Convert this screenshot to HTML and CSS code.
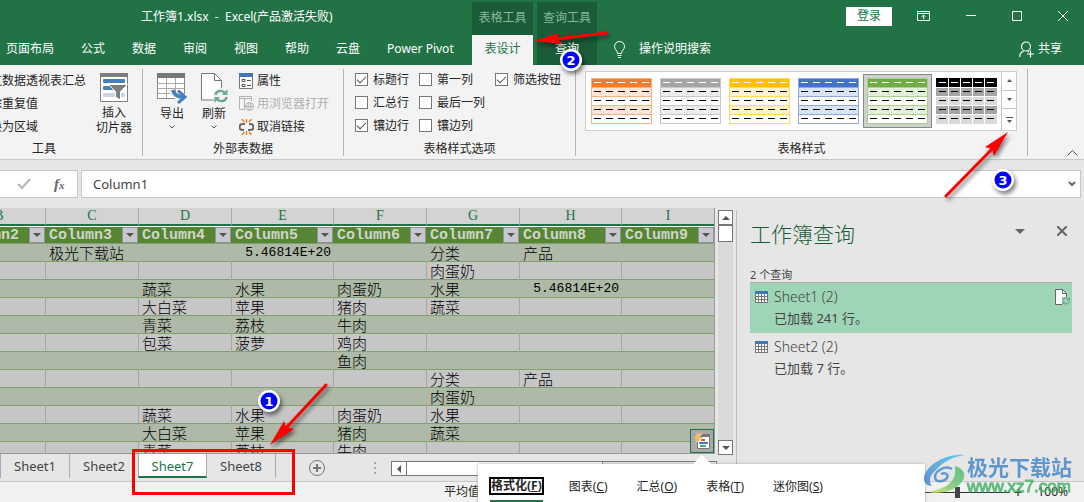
FILE: index.html
```html
<!DOCTYPE html>
<html lang="zh-CN">
<head>
<meta charset="utf-8">
<title>工作簿1.xlsx - Excel</title>
<link rel="stylesheet" href="styles.css">
</head>
<body>
<svg class="defs" width="0" height="0" aria-hidden="true">
  <symbol id="style-thumb" viewBox="0 0 61 46">
    <path fill="var(--line)" d="M0 0h61v46H0z"/>
    <path fill="var(--head)" d="M1 1h59v8H1z"/>
    <path fill="var(--band)" d="M1 10h59v8H1zM1 28h59v8H1z"/>
    <path fill="#fff" d="M1 19h59v8H1zM1 37h59v8H1z"/>
    <path stroke="#fff" stroke-dasharray="7 5" d="M3 4.500h56"/>
    <path stroke="#000" stroke-dasharray="7 5" d="M3 13.500h56M3 22.500h56M3 31.500h56M3 40.500h56"/>
  </symbol>
  <symbol id="sheet-icon" viewBox="0 0 13 12">
    <path fill="#777" d="M0 0h13v12H0z"/><path fill="#3f78b5" d="M0 0h13v3H0z"/>
    <path fill="#fff" d="M1 3h2v2H1zM4 3h2v2H4zM7 3h2v2H7zM10 3h2v2h-2zM1 6h2v2H1zM4 6h2v2H4zM7 6h2v2H7zM10 6h2v2h-2zM1 9h2v2H1zM4 9h2v2H4zM7 9h2v2H7zM10 9h2v2h-2z"/>
  </symbol>
  <symbol id="cycle" viewBox="0 0 14 14">
    <path fill="none" stroke="#6fa893" stroke-width="2.400" d="M1.500 6C2 1.500 8 .5 11 4M12.500 8C12 12.500 6 13.500 3 10"/>
    <path fill="#6fa893" d="M13.500 0v6H8zM.5 14V8H6z"/>
  </symbol>
</svg>

<header class="top">
  <div class="title">工作簿1.xlsx&nbsp; -&nbsp; Excel(产品激活失败)</div>
  <div class="context">表格工具</div>
  <div class="context">查询工具</div>
  <div class="window">
    <button class="login">登录</button>
    <button aria-label="功能区显示选项"><svg width="13" height="10" viewBox="0 0 13 10" fill="none" stroke="#fff"><path d="M.5.5h12v9H.5zM.5 2.500h12M6.500 8V4M4.500 6l2-2 2 2"/></svg></button>
    <button aria-label="最小化"><svg width="10" height="10" viewBox="0 0 10 10" stroke="#fff"><path d="M0 4.500h10"/></svg></button>
    <button aria-label="最大化"><svg width="10" height="10" viewBox="0 0 10 10" fill="none" stroke="#fff"><path d="M.5.5h9v9h-9z"/></svg></button>
    <button aria-label="关闭"><svg width="10" height="10" viewBox="0 0 10 10" stroke="#fff"><path d="M0 0l10 10M10 0L0 10"/></svg></button>
  </div>
  <nav class="tabs">
    <button>页面布局</button><button>公式</button><button>数据</button><button>审阅</button><button>视图</button><button>帮助</button><button>云盘</button><button>Power Pivot</button>
  </nav>
  <button class="tab-active">表设计</button>
  <button class="tab-query">查询</button>
  <div class="help">
    <button class="tell"><svg width="13" height="17" viewBox="0 0 13 17" fill="none" stroke="#fff"><path d="M4.500 12.500C4.500 9.500 1.500 8.500 1.500 5.500a5 5 0 0 1 10 0c0 3-3 4-3 7zM4.500 14.500h4M5 16.500h3"/></svg>操作说明搜索</button>
    <button class="share"><svg width="15" height="17" viewBox="0 0 15 17" fill="none" stroke="#fff" stroke-width="1.200"><circle cx="7" cy="5.500" r="4.500"/><path d="M.7 16c0-3 1.500-5 4-6M8.500 10l1.500 1M11.500 9.500v7M8 13h7"/></svg>共享</button>
  </div>
</header>

<section class="ribbon">
  <div class="group group-tools">
    <div class="body">
      <div class="stack words"><button>通过数据透视表汇总</button><button>删除重复值</button><button>转换为区域</button></div>
      <button class="big slicer"><svg width="28" height="29" viewBox="0 0 28 29"><path fill="#fff" stroke="#7d7d7d" d="M.5.5h27v28H.5z"/><path fill="#7d7d7d" d="M0 0h28v4H0z"/><rect x="3" y="6" width="22" height="4" rx="1" fill="#4680bd"/><rect x="3" y="13" width="15" height="4" rx="1" fill="#4680bd"/><rect x="3" y="20" width="22" height="4" rx="1" fill="#c2d5ea"/><path fill="#7d7d7d" stroke="#fff" d="M8.500 11.500h19l-7 7v8.500l-5-3v-5.500z"/></svg><span>插入<br>切片器</span></button>
    </div>
    <div class="caption">工具</div>
  </div>
  <div class="group group-data">
    <div class="body">
      <button class="big"><svg width="30" height="31" viewBox="0 0 30 31"><path fill="#fff" stroke="#8b8b8b" d="M.5.5h27v25H.5z"/><path fill="#777" d="M0 0h28v5H0z"/><path fill="none" stroke="#aaa" d="M9.500 5v20M18.500 5v20M1 10.500h26M1 15.500h26M1 20.500h26"/><path fill="none" stroke="#f3f3f3" stroke-width="6" d="M15 17c1 6 5 7 13 7"/><path fill="none" stroke="#4680bd" stroke-width="4" d="M16 17c1 5 4 7 12 7"/><path fill="none" stroke="#4680bd" stroke-width="3" d="M21 17.500l7 6.500-7 6"/></svg><span>导出</span><svg class="more" width="6" height="4" viewBox="0 0 6 4" fill="none" stroke="#555"><path d="M.5.5L3 3 5.500.5"/></svg></button>
      <button class="big"><svg width="28" height="31" viewBox="0 0 28 31"><path fill="#fff" stroke="#777" d="M1.500.5h13l7 7V27h-20z"/><path fill="none" stroke="#777" d="M14.500.5v7h7"/><circle cx="21" cy="23" r="8" fill="#f3f3f3"/><use href="#cycle" x="14" y="16" width="14" height="14"/></svg><span>刷新</span><svg class="more" width="6" height="4" viewBox="0 0 6 4" fill="none" stroke="#555"><path d="M.5.5L3 3 5.500.5"/></svg></button>
      <div class="stack">
        <button><svg width="15" height="16" viewBox="0 0 15 16"><path fill="#fff" stroke="#777" d="M.5.5h13v15H.5z"/><path fill="#3f78b5" d="M0 0h14v4H0z"/><path fill="none" stroke="#555" d="M3 6.500h3v2H3zM3 11.500h3v2H3zM8 7.500h4M8 12.500h4"/></svg>属性</button>
        <button disabled><svg width="15" height="16" viewBox="0 0 15 16" fill="none" stroke="#b3b3b3"><path d="M6 13.500H.5V.5h12V5M.5 2.500h12M5.500 3v10"/><circle cx="10.500" cy="10.500" r="4"/><path d="M6.500 10.500h8M10.500 6.500c-2 2-2 6 0 8M10.500 6.500c2 2 2 6 0 8"/></svg>用浏览器打开</button>
        <button><svg width="15" height="16" viewBox="0 0 15 16" fill="none"><path stroke="#666" stroke-width="2" d="M6 5H3.500a2.500 2.500 0 0 0 0 6H5M9 11h2.500a2.500 2.500 0 0 0 0-6H10"/><path stroke="#ec7a22" stroke-width="1.300" d="M7.500 0v4M3 0l2.500 3M12.500 0L10 3M7.500 12v4M5.500 13L3 16M10 13l2.500 3"/></svg>取消链接</button>
      </div>
    </div>
    <div class="caption">外部表数据</div>
  </div>
  <div class="group group-options">
    <div class="body checks">
      <label><input type="checkbox" checked>标题行</label><label><input type="checkbox">第一列</label><label><input type="checkbox" checked>筛选按钮</label>
      <label><input type="checkbox">汇总行</label><label><input type="checkbox">最后一列</label><span></span>
      <label><input type="checkbox" checked>镶边行</label><label><input type="checkbox">镶边列</label>
    </div>
    <div class="caption">表格样式选项</div>
  </div>
  <div class="group group-styles">
    <div class="gallery">
      <button class="orange" aria-label="橙色"><svg width="61" height="46"><use href="#style-thumb"/></svg></button>
      <button class="gray" aria-label="灰色"><svg width="61" height="46"><use href="#style-thumb"/></svg></button>
      <button class="gold" aria-label="金色"><svg width="61" height="46"><use href="#style-thumb"/></svg></button>
      <button class="blue" aria-label="蓝色"><svg width="61" height="46"><use href="#style-thumb"/></svg></button>
      <button class="green selected" aria-label="绿色"><svg width="61" height="46"><use href="#style-thumb"/></svg></button>
      <button aria-label="黑色"><svg width="61" height="46" viewBox="0 0 61 46"><path fill="#000" d="M0 0h61v9H0z"/><path fill="#a5a5a5" d="M0 10h61v8H0zM0 28h61v8H0z"/><path fill="#d9d9d9" d="M0 19h61v8H0zM0 37h61v9H0z"/><path stroke="#fff" d="M12.500 0v46M24.500 0v46M36.500 0v46M48.500 0v46"/><path stroke="#fff" stroke-dasharray="7 5" d="M3 4.500h56"/><path stroke="#000" stroke-dasharray="7 5" d="M3 13.500h56M3 22.500h56M3 31.500h56M3 40.500h56"/></svg></button>
      <div class="spin">
        <button aria-label="上一行"><svg width="5" height="3"><path fill="#555" d="M0 3h5L2.500 0z"/></svg></button>
        <button aria-label="下一行"><svg width="5" height="3"><path fill="#555" d="M0 0h5L2.500 3z"/></svg></button>
        <button aria-label="其他"><svg width="7" height="6"><path fill="#555" d="M0 0h7v1H0zM1 3h5L3.500 6z"/></svg></button>
      </div>
    </div>
    <div class="caption">表格样式</div>
  </div>
  <button class="collapse" aria-label="折叠功能区"><svg width="11" height="6" viewBox="0 0 11 6" fill="none" stroke="#555"><path d="M.5 5.500l5-5 5 5"/></svg></button>
</section>

<section class="formula">
  <div class="formula-tools">
    <svg width="14" height="12" viewBox="0 0 14 12" fill="none" stroke="#bbb" stroke-width="2.400"><path d="M1 6l4 4 8-9"/></svg>
    <span class="fx">f<small>x</small></span>
  </div>
  <div class="formula-box">
    <input type="text" value="Column1" aria-label="编辑栏">
    <svg width="8" height="6" viewBox="0 0 8 6" fill="none" stroke="#666" stroke-width="2"><path d="M1 1l3 3 3-3"/></svg>
  </div>
</section>

<main class="work">
  <div class="book">
    <div class="grid-row">
      <div class="sheet">
        <table>
          <colgroup><col class="n"><col class="n"><col class="n"><col class="w"><col class="n"><col class="n"><col class="w"><col class="n"></colgroup>
          <thead>
            <tr class="letters"><th>B</th><th>C</th><th>D</th><th>E</th><th>F</th><th>G</th><th>H</th><th>I</th></tr>
            <tr class="fields"><th><div>Column2<button aria-label="筛选"></button></div></th><th><div>Column3<button aria-label="筛选"></button></div></th><th><div>Column4<button aria-label="筛选"></button></div></th><th><div>Column5<button aria-label="筛选"></button></div></th><th><div>Column6<button aria-label="筛选"></button></div></th><th><div>Column7<button aria-label="筛选"></button></div></th><th><div>Column8<button aria-label="筛选"></button></div></th><th><div>Column9<button aria-label="筛选"></button></div></th></tr>
          </thead>
          <tbody>
            <tr><td></td><td>极光下载站</td><td></td><td class="num">5.46814E+20</td><td></td><td>分类</td><td>产品</td><td></td></tr>
            <tr><td></td><td></td><td></td><td></td><td></td><td>肉蛋奶</td><td></td><td></td></tr>
            <tr><td></td><td></td><td>蔬菜</td><td>水果</td><td>肉蛋奶</td><td>水果</td><td class="num">5.46814E+20</td><td></td></tr>
            <tr><td></td><td></td><td>大白菜</td><td>苹果</td><td>猪肉</td><td>蔬菜</td><td></td><td></td></tr>
            <tr><td></td><td></td><td>青菜</td><td>荔枝</td><td>牛肉</td><td></td><td></td><td></td></tr>
            <tr><td></td><td></td><td>包菜</td><td>菠萝</td><td>鸡肉</td><td></td><td></td><td></td></tr>
            <tr><td></td><td></td><td></td><td></td><td>鱼肉</td><td></td><td></td><td></td></tr>
            <tr><td></td><td></td><td></td><td></td><td></td><td>分类</td><td>产品</td><td></td></tr>
            <tr><td></td><td></td><td></td><td></td><td></td><td>肉蛋奶</td><td></td><td></td></tr>
            <tr><td></td><td></td><td>蔬菜</td><td>水果</td><td>肉蛋奶</td><td>水果</td><td></td><td></td></tr>
            <tr><td></td><td></td><td>大白菜</td><td>苹果</td><td>猪肉</td><td>蔬菜</td><td></td><td></td></tr>
            <tr><td></td><td></td><td>青菜</td><td>荔枝</td><td>牛肉</td><td></td><td></td><td></td></tr>
          </tbody>
        </table>
        <button class="quick" aria-label="快速分析"><svg width="17" height="17" viewBox="0 0 17 17"><path fill="#fff" stroke="#777" d="M3.500 3.500h12v12h-12z"/><path fill="#777" d="M6 1h10v3H6z"/><path fill="#d9532c" d="M7 6h4v2H7z"/><path fill="#3f78b5" d="M5 9h9v2H5z"/><path fill="#4da08a" d="M6 12h6v2H6z"/><path fill="#eebb78" d="M3 0h6L6 4h3L0 12l3-6H0z"/></svg></button>
      </div>
      <div class="vscroll">
        <button aria-label="向上滚动"><svg width="8" height="4"><path fill="#555" d="M0 4h8L4 0z"/></svg></button>
        <div class="thumb"></div>
        <div class="track"></div>
        <button aria-label="向下滚动"><svg width="8" height="4"><path fill="#555" d="M0 0h8L4 4z"/></svg></button>
      </div>
    </div>
    <div class="sheetbar">
      <button>Sheet1</button><button>Sheet2</button><button class="current">Sheet7</button><button>Sheet8</button>
      <button class="add" aria-label="新工作表"><svg width="16" height="16" viewBox="0 0 16 16" fill="none" stroke="#777"><circle cx="8" cy="8" r="7.500"/><path stroke-width="2" d="M8 4v8M4 8h8"/></svg></button>
      <svg class="grip" width="2" height="12"><path fill="#aaa" d="M0 0h2v2H0zM0 5h2v2H0zM0 10h2v2H0z"/></svg>
      <div class="hscroll"><button aria-label="向左滚动"><svg width="4" height="8"><path fill="#555" d="M4 0v8L0 4z"/></svg></button><div class="hthumb"></div><div class="htrack"></div></div>
    </div>
  </div>
  <aside class="pane">
    <div class="pane-head"><h2>工作簿查询</h2><button aria-label="任务窗格选项"><svg width="10" height="5"><path fill="#666" d="M0 0h10L5 5z"/></svg></button><button aria-label="关闭窗格"><svg width="10" height="10" viewBox="0 0 10 10" stroke="#666" stroke-width="2"><path d="M0 0l10 10M10 0L0 10"/></svg></button></div>
    <p class="count">2 个查询</p>
    <ul>
      <li class="on"><svg width="13" height="12"><use href="#sheet-icon"/></svg><div><strong>Sheet1 (2)</strong><span>已加载 241 行。</span></div><svg class="reload" width="15" height="16" viewBox="0 0 15 16"><path fill="#fff" stroke="#666" d="M.5.5h7l4 4v11H.5z"/><path fill="none" stroke="#666" d="M7.500.5v4h4"/><path fill="#9fd5b7" d="M7 8h8v8H7z"/><use href="#cycle" x="7" y="8" width="8" height="8"/></svg></li>
      <li><svg width="13" height="12"><use href="#sheet-icon"/></svg><div><strong>Sheet2 (2)</strong><span>已加载 7 行。</span></div></li>
    </ul>
  </aside>
</main>

<footer class="status">
  <span class="average">平均值</span>
  <div class="zoom"><input type="range" min="0" max="100" value="40" aria-label="缩放"><span class="plus">+</span><span>100%</span></div>
</footer>

<div class="popup">
  <button class="chosen"><span>格式化(<u>F</u>)</span></button><button>图表(<u>C</u>)</button><button>汇总(<u>O</u>)</button><button>表格(<u>T</u>)</button><button>迷你图(<u>S</u>)</button>
</div>

<div class="mark">
  <svg width="44" height="40" viewBox="0 0 44 40">
    <defs><linearGradient id="swoosh" x1="1" y1="0" x2="0" y2="1"><stop offset="0" stop-color="#4fc3ee"/><stop offset="1" stop-color="#3b7fc4"/></linearGradient><linearGradient id="leaf" x1="1" y1="0" x2="0" y2="1"><stop offset="0" stop-color="#43b66b"/><stop offset=".6" stop-color="#7cc96d"/><stop offset="1" stop-color="#e4dc4a"/></linearGradient></defs>
    <path fill="url(#swoosh)" d="M42 1C24-1 4 10 1 23c-1 5 2 9 8 9-4-5-2-11 4-16C19 9 28 3 42 1z"/>
    <path fill="url(#leaf)" d="M32 12c14 4 11 17-2 23-8 4-18 5-25 3 11-2 20-6 24-11 4-6 3-10 3-15z"/>
    <path fill="none" stroke="#4489c8" stroke-width="2.500" d="M29 15c-7-4-17 2-17 8 0 5 8 6 12 1 2-4-2-6-6-4"/>
  </svg>
  <div><b>极光下载站</b><span>www.xz7.com</span></div>
</div>

<svg class="notes" width="1084" height="502" viewBox="0 0 1084 502">
  <path fill="none" stroke="#f00" stroke-width="3" d="M133.500 450.500h160v43h-160z"/>
  <g class="lift">
    <path fill="none" stroke="#f00" stroke-width="3" stroke-linecap="round" d="M606 33L556 39M326 385l-40 43M946 196l48-49"/>
    <path fill="#f00" d="M534 41l25-8-2 5 5 6zM270 445l14-24 2 6 8 2zM1008 132l-23 15 7 2 2 7z"/>
    <circle cx="571" cy="60" r="11" fill="#fff"/><circle cx="269" cy="401" r="11" fill="#fff"/><circle cx="1003" cy="180" r="11" fill="#fff"/>
  </g>
  <circle cx="571" cy="60" r="8.500" fill="#00f"/><circle cx="269" cy="401" r="8.500" fill="#00f"/><circle cx="1003" cy="180" r="8.500" fill="#00f"/>
  <text x="571" y="65">2</text><text x="269" y="406">1</text><text x="1003" y="185">3</text>
</svg>
</body>
</html>
```
FILE: styles.css
```css
* { box-sizing: border-box; }
body {
  margin: 0;
  height: 100vh;
  display: flex;
  flex-direction: column;
  position: relative;
  overflow: hidden;
  background: #e6e6e6;
  color: #262626;
  font: 12px/16px "Noto Sans", "Noto Sans CJK SC", sans-serif;
}
button, input { font: inherit; color: inherit; }
button {
  border: 0;
  padding: 0;
  background: none;
  white-space: nowrap;
  display: inline-flex;
  align-items: center;
  justify-content: center;
}
svg { flex: none; display: block; }
.defs { position: absolute; }

/* title bar and ribbon tabs */
.top {
  flex: none;
  display: grid;
  grid-template-columns: 472px 61px 60px 1fr;
  grid-template-rows: 35px 30px;
  column-gap: 0;
  background: #217346;
  color: #fff;
}
.title { padding: 9px 0 0 141px; white-space: nowrap; }
.context {
  margin-top: 2px;
  padding-bottom: 2px;
  display: flex;
  align-items: center;
  justify-content: center;
  background: #1b5c38;
  color: #85b898;
}
.context + .context, .tab-query { margin-left: 4px; margin-right: -4px; }
.window { display: flex; align-items: center; justify-content: flex-end; gap: 36px; padding-right: 16px; padding-bottom: 3px; }
.window .login { width: 46px; height: 19px; background: #fff; color: #217346; margin-right: -11px; }
.tabs { display: flex; gap: 27px; padding-left: 6px; padding-bottom: 3px; }
.tab-active { background: #f3f3f3; color: #217346; padding-bottom: 3px; }
.tab-query { background: #1b5c38; color: #fff; padding-bottom: 3px; }
.help { display: flex; justify-content: space-between; padding: 0 22px 2px 20px; }
.tell { gap: 13px; }
.share { gap: 4px; }

/* ribbon */
.ribbon {
  flex: none;
  height: 95px;
  display: flex;
  background: #f3f3f3;
  border-bottom: 1px solid #c8c8c8;
}
.group {
  flex: none;
  height: 87px;
  margin-top: 4px;
  border-right: 1px solid #b5b5b5;
  display: flex;
  flex-direction: column;
}
.group .caption { margin-top: auto; margin-bottom: -1px; text-align: center; }
.body { display: flex; align-items: flex-start; }
.group-tools { width: 197px; margin-left: -54px; }
.group-tools .body { padding-left: 32px; }
.group-data { width: 201px; }
.group-data .body { padding-left: 14px; gap: 12px; }
.group-data .stack { margin-left: -2px; }
.group-options { width: 232px; }
.group-styles { width: 452px; }
.stack { display: flex; flex-direction: column; align-items: flex-start; line-height: 23px; }
.stack button { height: 23px; gap: 3px; }
.stack button:disabled { color: #b0b0b0; }
.big { flex-direction: column; width: 30px; padding-top: 4px; line-height: 15px; }
.big span { padding-top: 2px; }
.big .more { margin-top: 4px; }
.slicer { width: 38px; margin-left: 9px; }
.slicer span { padding-top: 3px; }
.checks {
  display: grid;
  grid-template-columns: 64px 76px auto;
  grid-auto-rows: 23px;
  align-items: center;
  margin-top: -1px;
  padding-left: 11px;
}
.checks label { display: flex; align-items: center; gap: 5px; white-space: nowrap; }
.checks input {
  appearance: none;
  width: 13px;
  height: 13px;
  margin: 0;
  border: 1px solid #777;
  background: #fff;
  display: grid;
  place-items: center;
}
.checks input:checked::before {
  content: "";
  width: 8px;
  height: 4px;
  border: solid #555;
  border-width: 0 0 1px 1px;
  transform: translateY(-1px) rotate(-45deg);
}
.gallery {
  display: flex;
  margin: 2px 10px 0 9px;
  padding-left: 1px;
  height: 60px;
  border: 1px solid #cfcfcf;
  background: #fff;
}
.gallery > button { width: 69px; height: 54px; margin-top: 2px; border: 1px solid transparent; }
.gallery > .selected { background: #cfcfcf; border: 1px solid #888; }
.orange { --head: #ed7d31; --line: #f4b183; --band: #fbe5d6; }
.gray { --head: #a5a5a5; --line: #c9c9c9; --band: #ededed; }
.gold { --head: #ffc000; --line: #ffd966; --band: #fff2cc; }
.blue { --head: #4472c4; --line: #8faadc; --band: #dae3f3; }
.green { --head: #70ad47; --line: #a9d18e; --band: #e2f0d9; }
.spin { flex: 1; display: grid; border-left: 1px solid #c4c4c4; }
.spin button + button { border-top: 1px solid #c4c4c4; }
.collapse { margin: auto 6px 3px auto; }

/* formula bar */
.formula { flex: none; display: flex; gap: 3px; padding: 10px 3px 10px 0; }
.formula-tools, .formula-box { height: 28px; background: #fff; border: 1px solid #c6c6c6; display: flex; align-items: center; }
.formula-tools { width: 78px; border-left: 0; padding-left: 17px; gap: 23px; }
.fx { font: italic bold 15px "Liberation Serif", serif; color: #666; }
.fx small { font-size: 11px; }
.formula-box { flex: 1; padding: 0 4px 0 11px; }
.formula-box input { flex: 1; border: 0; padding: 0; background: none; font-size: 13px; color: #444; }

/* workbook */
.work { flex: 1; min-height: 0; display: flex; }
.book { flex: 1; min-width: 0; display: flex; flex-direction: column; }
.grid-row { flex: 1; min-height: 0; display: flex; gap: 3px; }
.sheet { flex: 1; min-width: 0; overflow: hidden; position: relative; border-bottom: 1px solid #999; border-right: 1px solid #999; }
table { border-collapse: separate; border-spacing: 0; table-layout: fixed; width: 762px; margin-left: -47px; }
.n { width: 93px; }
.w { width: 102px; }
th, td { height: 18px; padding: 0 3px; white-space: nowrap; line-height: 16px; text-align: left; font-weight: normal; }
.letters th {
  background: #d3d3d3;
  color: #217346;
  font: 14px/16px "Liberation Serif", serif;
  text-align: center;
  border-right: 1px solid #ababab;
  border-bottom: 2px solid #217346;
}
.fields th {
  padding: 0;
  background: #568534;
  color: #d0d5ca;
  font: bold 15px/17px "Liberation Mono", monospace;
  border-top: 1px solid #fff;
  border-bottom: 1px solid #80a070;
}
.fields div { display: flex; justify-content: space-between; padding: 0 1px 0 3px; height: 16px; }
.fields button { width: 16px; height: 16px; background: #c8c8cc; border: 1px solid #92929a; }
.fields button::before { content: ""; border: 4px solid transparent; border-top: 4px solid #555; border-bottom: 0; }
td {
  color: #000;
  font: 15px/16px "Noto Sans CJK SC", sans-serif;
  font-weight: 300;
  padding-top: 1px;
  background: #c6c6c6;
  border-right: 1px solid #a6a6a6;
  border-bottom: 1px solid #80a070;
}
tbody tr { height: 18px; }
tbody tr:nth-child(odd) td { background: #aeb9a7; border-right-color: #aeb9a7; }
.num { text-align: right; font: 13px/16px "Liberation Mono", monospace; padding-right: 2px; }
.quick { position: absolute; right: 0; bottom: 0; width: 24px; height: 24px; background: #a9a9a9; border: 1px solid #217346; }
.vscroll { width: 18px; padding: 2px 3px 0 0; margin-bottom: -1px; display: flex; flex-direction: column; }
.vscroll button, .thumb { height: 15px; background: #fff; border: 1px solid #777; }
.thumb { height: 17px; }
.track { flex: 1; background: #dadada; }

.sheetbar { flex: none; height: 28px; display: flex; align-items: flex-start; border-bottom: 1px solid #c6c6c6; margin-right: -1px; }
.sheetbar > button { width: 69px; height: 24px; font-size: 13px; color: #444; border-left: 1px solid #ababab; }
.sheetbar > .current { background: #fff; color: #217346; border-bottom: 2px solid #217346; padding-top: 2px; border-right: 1px solid #ababab; }
.sheetbar > .current + button { border-left: 0; border-right: 1px solid #ababab; }
.sheetbar > .add { width: 16px; margin-left: 33px; border: 0; padding-top: 4px; }
.grip { margin: 8px 15px 0 49px; }
.hscroll { flex: 1; display: flex; margin: 7px 20px 0 0; height: 15px; border: 1px solid #777; }
.hscroll button { width: 15px; background: #fff; border-right: 1px solid #777; }
.hthumb { width: 196px; background: #fff; border-right: 1px solid #777; }

/* query pane */
.pane { width: 348px; margin-top: 2px; padding: 11px 12px 0 13px; border-left: 1px solid #bcbcbc; border-bottom: 1px solid #c6c6c6; }
.pane-head { display: flex; align-items: flex-start; gap: 32px; }
.pane-head h2 { flex: 1; margin: 0; font-size: 21px; font-weight: 300; line-height: 26px; color: #185c37; }
.pane-head button { height: 20px; }
.pane-head button:last-child { margin-right: 5px; }
.count { margin: 21px 0 0; font-size: 11px; line-height: 14px; color: #444; }
.pane ul { list-style: none; margin: 0; padding: 0; border-top: 1px solid #b0b0b0; }
.pane li { display: flex; gap: 6px; height: 50px; padding: 4px 2px 0 5px; color: #444; }
.pane li > svg { margin-top: 4px; }
.pane li .reload { margin: 2px 0 0; }
.pane li div { flex: 1; }
.pane strong, .pane li span { display: block; font-size: 14px; font-weight: 300; line-height: 20px; }
.pane li span { font-size: 13px; font-weight: 400; line-height: 22px; }
.on { background: #9fd5b7; }

/* status bar */
.status { flex: none; height: 20px; background: #f1f1f1; display: flex; align-items: center; justify-content: space-between; padding: 0 16px 0 444px; }
.zoom { display: flex; align-items: center; }
.zoom input { appearance: none; width: 88px; height: 11px; margin: 0 4px 0 0; background: linear-gradient(#333, #333) center / 100% 1px no-repeat; }
.zoom input::-webkit-slider-thumb { appearance: none; width: 5px; height: 11px; background: #444; }
.plus { font-size: 15px; margin-right: 15px; }

/* quick analysis callout */
.popup {
  position: absolute;
  left: 478px;
  top: 464px;
  width: 447px;
  height: 60px;
  display: flex;
  align-items: flex-start;
  gap: 29px;
  padding: 14px 12px 0;
  background: #fff;
  box-shadow: 0 0 3px #aaa;
}
.popup::before {
  content: "";
  position: absolute;
  left: 215px;
  top: -9px;
  border: 9px solid transparent;
  border-top: 0;
  border-bottom-color: #fff;
}
.popup button { height: 17px; }
.popup .chosen { height: 24px; align-items: flex-start; border-bottom: 2px solid #217346; font-weight: bold; margin-right: -3px; }
.chosen span { outline: 2px solid #000; outline-offset: -1px; height: 16px; padding: 0 1px; }

/* site logo */
.mark { position: absolute; right: 12px; bottom: 8px; display: flex; opacity: .8; white-space: nowrap; }
.mark b { display: block; font-size: 21px; line-height: 26px; color: #3d84c8; }
.mark span { display: block; font: 17px/14px "Liberation Sans", sans-serif; color: #3fae62; -webkit-text-stroke: 1px #3fae62; }

/* callout drawings */
.notes { position: absolute; left: 0; top: 0; pointer-events: none; }
.notes text { fill: #fff; font: bold 13px "DejaVu Sans", sans-serif; text-anchor: middle; }
.lift { filter: drop-shadow(2px 3px 2px rgba(0, 0, 0, .5)); }
```
